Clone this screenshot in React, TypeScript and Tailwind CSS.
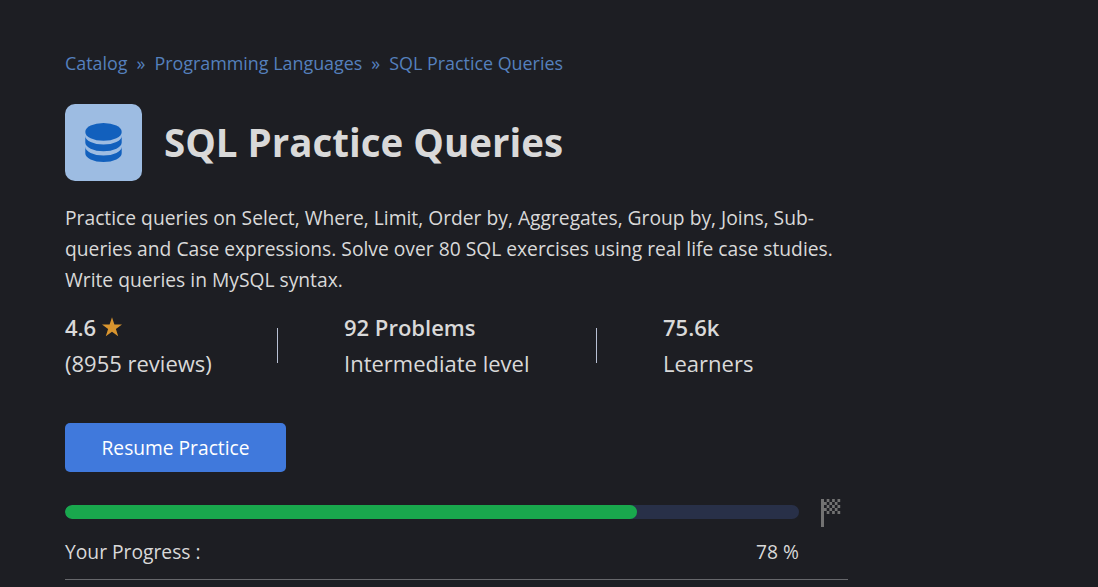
const crumbs = ["Catalog", "Programming Languages", "SQL Practice Queries"];

function Stat({ value, label, star }: { value: string; label: string; star?: boolean }) {
  return (
    <div className="text-[22px] leading-9 whitespace-nowrap">
      <div className="flex items-center font-semibold">
        {value}
        {star && (
          <svg viewBox="0 0 20 20" className="ml-1.5 h-5 w-5 fill-[#d9952f]">
            <path d="M10 .3l2.400 7.200H20l-6.100 4.500 2.300 7.300L10 14.800 3.800 19.300l2.300-7.300L0 7.500h7.600z" />
          </svg>
        )}
      </div>
      <div>{label}</div>
    </div>
  );
}

function DatabaseIcon() {
  return (
    <svg viewBox="0 0 37 39" className="h-[39px] w-[37px] fill-[#1260bd]">
      <ellipse cx="18.5" cy="8.9" rx="18.2" ry="8.9" />
      <path d="M.3 13A18.200 8.600 0 0 0 36.700 13V19.500A18.200 8.700 0 0 1 .3 19.500z" />
      <path d="M.3 23.800A18.200 8.600 0 0 0 36.700 23.800V30.300A18.200 8.700 0 0 1 .3 30.300z" />
    </svg>
  );
}

function Flag() {
  const cells = Array.from({ length: 30 }, (_, i) => [i % 6, Math.floor(i / 6)]).filter(([x, y]) => (x + y) % 2 === 1);
  return (
    <svg viewBox="0 0 20 28" className="h-7 w-5 fill-[#727272]">
      <path d="M0 0h3v28H0z" />
      {cells.map(([x, y]) => (
        <rect key={`${x}-${y}`} x={3 + x * 2.7} y={y * 3} width="2.7" height="3" />
      ))}
    </svg>
  );
}

export default function App() {
  return (
    <div className="h-[587px] overflow-hidden bg-[#1d1e23] pl-[65px] font-['Open_Sans',sans-serif] text-[#d9d9d9]">
      <main className="flex w-[783px] flex-col">
        <nav className="mt-[50px] flex h-[27px] items-center gap-[9px] text-[17.9px] text-[#5580bd]">
          {crumbs.map((c, i) => (
            <span key={c} className="flex gap-[9px]">
              {i > 0 && <span>»</span>}
              <a>{c}</a>
            </span>
          ))}
        </nav>
        <header className="mt-[27px] flex items-center gap-[22px]">
          <div className="flex size-[77px] items-center justify-center rounded-[10px] bg-[#9dbce2]">
            <DatabaseIcon />
          </div>
          <h1 className="pb-[2px] text-[38.5px] leading-[54px] font-bold">SQL Practice Queries</h1>
        </header>
        <p className="mt-[21px] text-[19.25px] leading-[31px] whitespace-nowrap">
          Practice queries on Select, Where, Limit, Order by, Aggregates, Group by, Joins, Sub-
          <br />
          queries and Case expressions. Solve over 80 SQL exercises using real life case studies.
          <br />
          Write queries in MySQL syntax.
        </p>
        <section className="mt-[14px] flex items-center">
          <div className="w-[212px]"><Stat value="4.6" label="(8955 reviews)" star /></div>
          <div className="mr-[66px] h-[35px] w-px bg-[#b8c0d4]" />
          <div className="w-[252px]"><Stat value="92 Problems" label="Intermediate level" /></div>
          <div className="mr-[66px] h-[35px] w-px bg-[#b8c0d4]" />
          <Stat value="75.6k" label="Learners" />
        </section>
        <button className="mt-[42px] h-[49px] w-[221px] rounded-[5px] bg-[#4079dc] pt-px text-[19.2px] text-white">Resume Practice</button>
        <div className="mt-[27px] flex h-[28px] items-center gap-[22px]">
          <div className="mb-[2px] h-[14px] w-[734px] overflow-hidden rounded-full bg-[#283048]">
            <div className="h-full w-[572px] rounded-full bg-[#19a84d]" />
          </div>
          <Flag />
        </div>
        <div className="mt-[10px] flex w-[734px] justify-between text-[19.25px] leading-[30px]">
          <span>Your Progress :</span>
          <span>78 %</span>
        </div>
        <div className="mt-[12px] h-px bg-[#66676b]" />
      </main>
    </div>
  );
}
